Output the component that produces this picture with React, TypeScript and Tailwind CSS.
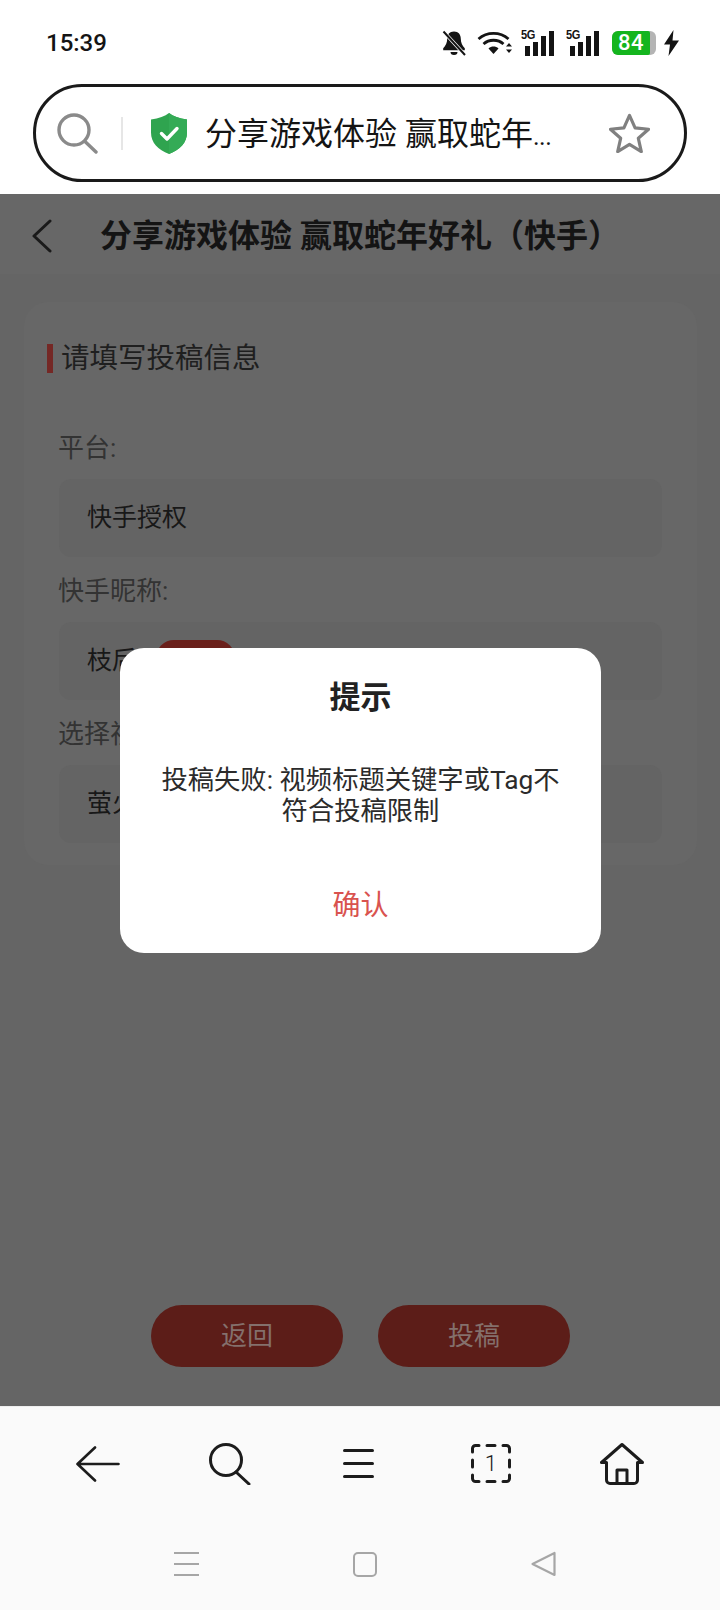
import React from "react";

const FONT = "font-['Roboto','Noto_Sans_CJK_SC',sans-serif]";

function BellOff() {
  return (
    <svg width="24" height="26" viewBox="0 0 24 26" className="mr-[11px]">
      <path d="M12 1.500c-4.500 0-6.800 3.200-6.800 7.300 0 4.200-1.500 6.700-4 9.400v2h21.600v-2c-2.500-2.700-4-5.200-4-9.400 0-4.100-2.300-7.300-6.800-7.300z" fill="#141414" />
      <path d="M8.500 22h7a3.500 3 0 0 1-7 0z" fill="#141414" />
      <path d="M1 1l22 24" stroke="#ffffff" strokeWidth="3.500" />
      <path d="M1.500 1.500l21.500 23.500" stroke="#141414" strokeWidth="2" />
    </svg>
  );
}

function Wifi() {
  return (
    <svg width="35" height="24" viewBox="0 0 35 24" fill="none" className="mr-[9px]">
      <path d="M1.500 8c8.500-7.500 21.500-7.500 30 0" stroke="#141414" strokeWidth="2.800" />
      <path d="M6.500 13c5.500-5 14.500-5 20 0" stroke="#141414" strokeWidth="2.800" />
      <path d="M11.500 17.500c3-2.600 7-2.600 10 0L16.500 23z" fill="#141414" />
      <path d="M29 15.500h6l-3-3.500zM29 18.500h6l-3 3.500z" fill="#141414" />
    </svg>
  );
}

function Signal() {
  return (
    <div className="relative w-[36px] h-[26px]">
      <span className="absolute left-0 top-[-3px] text-[13px] leading-[16px] font-bold tracking-[-0.5px] text-[#141414] font-['Liberation_Sans',sans-serif] scale-x-[0.85] origin-left">5G</span>
      <div className="absolute bottom-0 left-[4px] flex items-end gap-[3px]">
        <div className="w-[5px] h-[10px] bg-[#141414]" />
        <div className="w-[5px] h-[14px] bg-[#141414]" />
        <div className="w-[5px] h-[20px] bg-[#141414]" />
        <div className="w-[5px] h-[25px] bg-[#141414]" />
      </div>
    </div>
  );
}

function Battery() {
  return (
    <div className="flex items-center ml-[10px] mr-[8px]">
      <div className="w-[44px] h-[24px] rounded-[6px] overflow-hidden flex bg-[#b4b4b4]">
        <div className="w-[38px] h-full bg-[#14b51e] rounded-r-[2px] flex items-center justify-center text-white text-[22px] font-medium leading-none tracking-[0.5px]">84</div>
      </div>
    </div>
  );
}

function StatusBar() {
  return (
    <div className="h-[84px] flex items-center justify-between pl-[46px] pr-[41px] bg-white">
      <span className="text-[24px] font-medium leading-none text-[#141414] pt-[2px]">15:39</span>
      <div className="flex items-center pt-[2px]">
        <BellOff />
        <Wifi />
        <Signal />
        <div className="w-[9px]" />
        <Signal />
        <Battery />
        <svg width="15" height="26" viewBox="0 0 15 26">
          <path d="M9.500 0L0 14.500h6L4.500 26 15 10.500H8.500z" fill="#141414" />
        </svg>
      </div>
    </div>
  );
}

function AddressBar() {
  return (
    <div className="h-[110px] bg-white pl-[33px] pr-[33px]">
      <div className="h-[98px] rounded-full border-[3px] border-[#1a1a1a] flex items-center pl-[21px] pr-[34px]">
        <svg width="41" height="41" viewBox="0 0 41 41" fill="none" stroke="#8a8a8a" strokeWidth="3.400" strokeLinecap="round">
          <circle cx="17" cy="17" r="15" />
          <path d="M28 28.500l11 10.500" />
        </svg>
        <div className="w-[2px] h-[33px] bg-[#e6e6e6] ml-[23px] mr-[27px]" />
        <svg width="38" height="41" viewBox="0 0 38 41">
          <path d="M19 0c4 3 10 5.500 18 6.500v13c0 10-7 17.500-18 21.500C8 37 1 29.500 1 19.500v-13C9 5.500 15 3 19 0z" fill="#2fa44f" />
          <path d="M19 0c4 3 10 5.500 18 6.500v13c0 10-7 17.500-18 21.500z" fill="#34ab56" />
          <path d="M11.500 20.500l5.500 5.500 10-10.500" fill="none" stroke="#ffffff" strokeWidth="3.400" strokeLinecap="round" strokeLinejoin="round" />
        </svg>
        <div className="ml-[17px] text-[32px] leading-none text-[#141414] whitespace-nowrap flex-1 pt-[1px]">
          分享游戏体验 赢取蛇年<span className="text-[25px] tracking-[-0.5px]">...</span>
        </div>
        <svg width="41" height="40" viewBox="0 0 44 43" fill="none" stroke="#808080" strokeWidth="3.400" strokeLinejoin="round">
          <path d="M22 2.500l6 13.500 14.500 1.500-11 9.700 3.200 14.300L22 33.800 9.300 41.500l3.200-14.300-11-9.700L16 16z" />
        </svg>
      </div>
    </div>
  );
}

function Field({ label, value, badge }: { label: string; value: string; badge?: boolean }) {
  return (
    <div className="mb-[18px] last:mb-0">
      <div className="h-[32px] mb-[15px] ml-[-1px] text-[26px] leading-[32px] text-[#333333]">{label}</div>
      <div className="h-[78px] rounded-[12px] bg-[#646464] pl-[28px] flex items-center text-[25px] text-[#181818]">
        <span>{value}</span>
        {badge && <div className="w-[79px] h-[40px] rounded-[18px] bg-[#6a201b] ml-[19px] mt-[-3px]" />}
      </div>
    </div>
  );
}

function Dialog() {
  return (
    <div className="absolute left-[120px] top-[454px] w-[481px] h-[305px] rounded-[24px] bg-white flex flex-col items-center">
      <div className="mt-[32px] text-[31px] leading-[36px] font-bold text-[#222222]">提示</div>
      <div className="mt-[49px] w-[410px] text-center text-[26.300px] leading-[31px] text-[#2b2b2b]">
        投稿失败: 视频标题关键字或Tag不符合投稿限制
      </div>
      <div className="mt-[61px] text-[28px] leading-[36px] text-[#d9534f]">确认</div>
    </div>
  );
}

function Page() {
  return (
    <div className="relative flex-1 bg-[#656565] flex flex-col">
      <div className="h-[80px] pt-[3px] bg-[#676767] flex items-center pl-[32px]">
        <svg width="20" height="34" viewBox="0 0 20 34" fill="none" stroke="#1a1a1a" strokeWidth="3" strokeLinecap="round" strokeLinejoin="round">
          <path d="M18 2L2 17l16 15" />
        </svg>
        <div className="ml-[48px] text-[32px] font-bold leading-none text-[#141414] whitespace-nowrap">
          分享游戏体验 赢取蛇年好礼（快手）
        </div>
      </div>
      <div className="mt-[28px] ml-[24px] w-[673px] rounded-[24px] bg-[#676767] pt-[42px] pb-[22px] px-[35px]">
        <div className="flex items-center h-[29px] ml-[-12px] mb-[59px]">
          <div className="w-[6px] h-[29px] bg-[#752825]" />
          <div className="ml-[8px] pt-[1px] text-[28.500px] leading-none text-[#1f1f1f]">请填写投稿信息</div>
        </div>
        <Field label="平台:" value="快手授权" />
        <Field label="快手昵称:" value="枝后" badge />
        <Field label="选择视频:" value="萤火" />
      </div>
      <div className="mt-auto mb-[39px] ml-[151px] flex gap-[35px]">
        <div className="w-[192px] h-[62px] rounded-full bg-[#5c1d18] flex items-center justify-center text-[26px] text-[#84706c]">返回</div>
        <div className="w-[192px] h-[62px] rounded-full bg-[#5c1d18] flex items-center justify-center text-[26px] text-[#84706c]">投稿</div>
      </div>
      <Dialog />
    </div>
  );
}

function BrowserNav() {
  return (
    <div className="h-[114px] pb-[1px] px-[33px] grid grid-cols-5 items-center justify-items-center">
      <svg width="44" height="36" viewBox="0 0 44 36" fill="none" stroke="#1c1c1c" strokeWidth="2.600" strokeLinecap="round" strokeLinejoin="round">
        <path d="M19 1.500L1.500 18 19 34.500M2 18h40.500" />
      </svg>
      <svg width="42" height="42" viewBox="0 0 42 42" fill="none" stroke="#1c1c1c" strokeWidth="3" strokeLinecap="round" className="ml-[1px]">
        <circle cx="17" cy="17" r="15.500" />
        <path d="M27 29l13 12" />
      </svg>
      <div className="flex flex-col gap-[10px] w-[31px] mr-[2px]">
        <div className="h-[3px] bg-[#1c1c1c] rounded-full" />
        <div className="h-[3px] bg-[#1c1c1c] rounded-full" />
        <div className="h-[3px] bg-[#1c1c1c] rounded-full" />
      </div>
      <div className="relative w-[40px] h-[39px] flex items-center justify-center text-[22px] font-light leading-none text-[#1c1c1c]">
        <svg width="40" height="39" viewBox="0 0 40 39" fill="none" stroke="#1c1c1c" strokeWidth="3" strokeLinecap="round" strokeLinejoin="round" className="absolute inset-0">
          <path d="M1.500 8V4.500a3 3 0 0 1 3-3H8M32 1.500h3.500a3 3 0 0 1 3 3V8M38.500 31v3.500a3 3 0 0 1-3 3H32M8 37.500H4.500a3 3 0 0 1-3-3V31" />
          <path d="M16 1.500h8M16 37.500h8M1.500 16v7M38.500 16v7" />
        </svg>
        1
      </div>
      <svg width="44" height="42" viewBox="0 0 44 42" fill="none" stroke="#1c1c1c" strokeWidth="3" strokeLinecap="round" strokeLinejoin="round">
        <path d="M22 1.500L1.500 19.500H6.500V37a3.500 3.500 0 0 0 3.500 3.500h24a3.500 3.500 0 0 0 3.500-3.500V19.500h5z" />
        <path d="M17 40V27h10v13" />
      </svg>
    </div>
  );
}

function SystemNav() {
  return (
    <div className="h-[89px] pb-[3px] pl-[97px] pr-[87px] grid grid-cols-3 items-center justify-items-center">
      <div className="flex flex-col gap-[8.500px] w-[25px]">
        <div className="h-[2.500px] bg-[#a6a6a6]" />
        <div className="h-[2.500px] bg-[#a6a6a6]" />
        <div className="h-[2.500px] bg-[#a6a6a6]" />
      </div>
      <div className="w-[24px] h-[25px] rounded-[5px] border-[2px] border-[#a6a6a6]" />
      <svg width="25" height="26" viewBox="0 0 25 26" fill="none" stroke="#a6a6a6" strokeWidth="2.200" strokeLinejoin="round">
        <path d="M23.500 2v22L1.500 13z" />
      </svg>
    </div>
  );
}

export default function App() {
  return (
    <div className={`w-[720px] h-[1610px] overflow-hidden flex flex-col bg-white ${FONT}`}>
      <StatusBar />
      <AddressBar />
      <Page />
      <div className="h-[204px] bg-[#fafafa] border-t border-[#eeeeee]">
        <BrowserNav />
        <SystemNav />
      </div>
    </div>
  );
}
